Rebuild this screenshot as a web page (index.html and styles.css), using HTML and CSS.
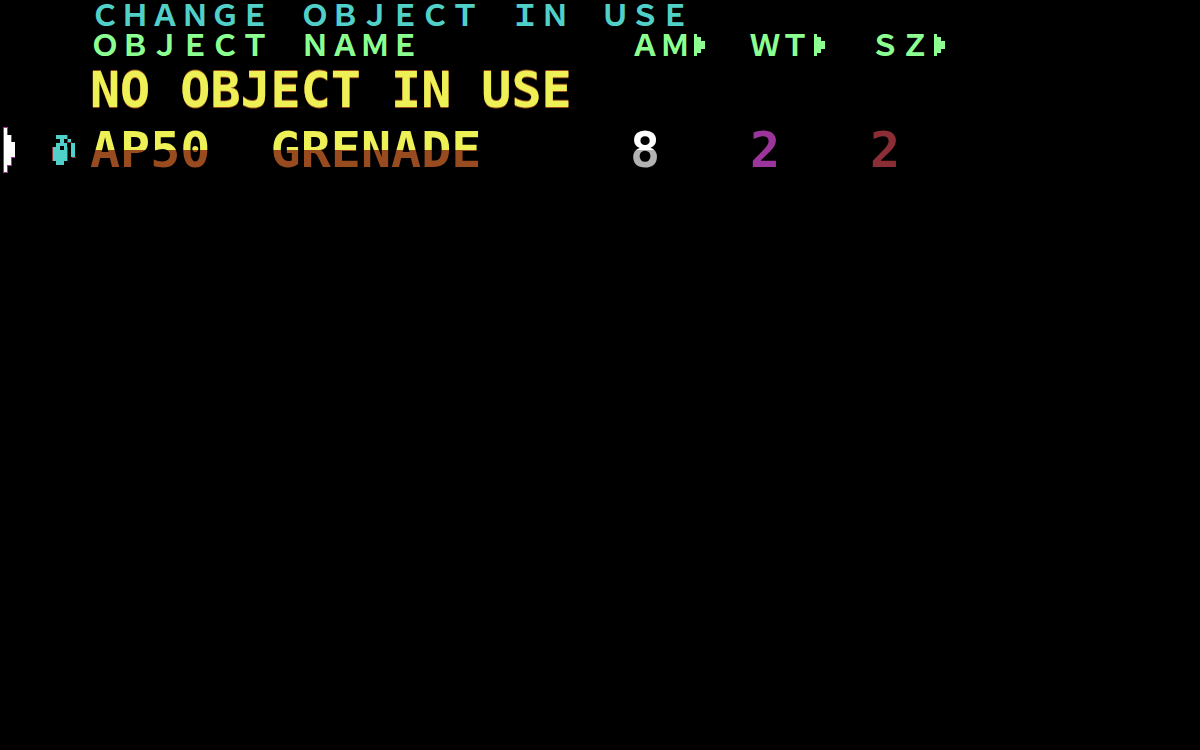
FILE: index.html
```html
<!DOCTYPE html>
<html lang="en">
<head>
    <meta charset="UTF-8">
    <meta name="viewport" content="width=device-width, initial-scale=1.0">
    <title>Change Object In Use</title>
    <link rel="stylesheet" href="styles.css">
</head>
<body>
    <main class="screen">
        <h1 class="title">CHANGE OBJECT IN USE</h1>
        <table class="objects">
            <colgroup>
                <col class="col-marker">
                <col class="col-icon">
                <col class="col-name">
                <col class="col-stat">
                <col class="col-stat">
                <col>
            </colgroup>
            <thead>
                <tr>
                    <td></td>
                    <td></td>
                    <th scope="col">OBJECT NAME</th>
                    <th scope="col"><span class="stat">AM<svg class="arrow" viewBox="0 0 11 22" aria-hidden="true"><path d="M0 0h3v3h4v4h4v8H7v4H3v3H0z"/></svg></span></th>
                    <th scope="col"><span class="stat">WT<svg class="arrow" viewBox="0 0 11 22" aria-hidden="true"><path d="M0 0h3v3h4v4h4v8H7v4H3v3H0z"/></svg></span></th>
                    <th scope="col"><span class="stat">SZ<svg class="arrow" viewBox="0 0 11 22" aria-hidden="true"><path d="M0 0h3v3h4v4h4v8H7v4H3v3H0z"/></svg></span></th>
                </tr>
            </thead>
            <tbody>
                <tr>
                    <td></td>
                    <td></td>
                    <td class="name">NO OBJECT IN USE</td>
                    <td></td>
                    <td></td>
                    <td></td>
                </tr>
                <tr class="selected">
                    <td>
                        <svg class="marker" viewBox="0 0 12 46" aria-hidden="true">
                            <path fill="#9b359b" d="M0 0h5v8h4v7h3v16H9v8H5v7H0z"/>
                            <path fill="#ffffff" d="M1 1h3v7h4v7h4v15H8v8H4v7H1z"/>
                        </svg>
                    </td>
                    <td>
                        <svg class="grenade" viewBox="0 0 72 90" aria-hidden="true">
                            <path fill="#8b2d35" d="M45 0h3v24h-3zM0 36h3v42H0zM45 36h3v42h-3zM12 24h12v3H12zM48 21h12v3H48zM57 24h3v45h12v-3H57z"/>
                            <path fill="#50d0c8" fill-rule="evenodd" d="M12 0h33v12H36v12h9v54H36v12H12V78H3V36h9V24h12V12H12zM24 33v12h12V33zM48 12h9v9h-9zM57 24h12v42H57z"/>
                        </svg>
                    </td>
                    <td class="name">AP50&nbsp; GRENADE</td>
                    <td class="amount">8</td>
                    <td class="weight">2</td>
                    <td class="size">2</td>
                </tr>
            </tbody>
        </table>
    </main>
</body>
</html>
```

FILE: styles.css
```css
body {
    margin: 0;
    background-color: #000;
    color: #8cff91;
    font-family: "DejaVu Sans Mono", monospace;
}
.title {
    margin: 0;
    padding: 0 0 4px 7.5%;
    color: #50d0c8;
}
.title,
th {
    font-family: "Noto Sans CJK JP", sans-serif;
    font-size: 30px;
    font-weight: bold;
    line-height: 26px;
    font-variant-east-asian: full-width;
    white-space: pre;
    text-align: left;
}
.objects {
    width: 100%;
    table-layout: fixed;
    border-collapse: collapse;
}
.col-marker {
    width: 2.5%;
}
.col-icon {
    width: 5%;
}
.col-name {
    width: 45%;
}
.col-stat {
    width: 10%;
}
th,
td {
    padding: 0;
}
thead th {
    padding-bottom: 4px;
}
.stat {
    display: flex;
    align-items: flex-end;
    gap: 4px;
}
.arrow {
    width: 11px;
    height: 22px;
    fill: #8cff91;
}
tbody td {
    height: 60px;
    font-size: 50px;
    font-weight: bold;
    line-height: 60px;
    white-space: nowrap;
}
.name {
    color: #eef156;
    text-shadow: 0 1px #984b1e, 0 -1px #984b1e;
}
.marker {
    display: block;
    width: 12px;
    height: 46px;
    margin-left: 3px;
}
.grenade {
    display: block;
    width: 24px;
    height: 30px;
    margin-left: 22px;
}
/* the selected row is drawn in two halves */
.selected .name,
.selected .amount {
    color: transparent;
    text-shadow: none;
    -webkit-background-clip: text;
    background-clip: text;
}
.selected .name {
    background-image: linear-gradient(#eef156 50%, #984b1e 50%);
}
.selected .amount {
    background-image: linear-gradient(#fff 50%, #b2b2b2 50%);
}
.weight {
    color: #9b359b;
}
.size {
    color: #8b2d35;
}
```
